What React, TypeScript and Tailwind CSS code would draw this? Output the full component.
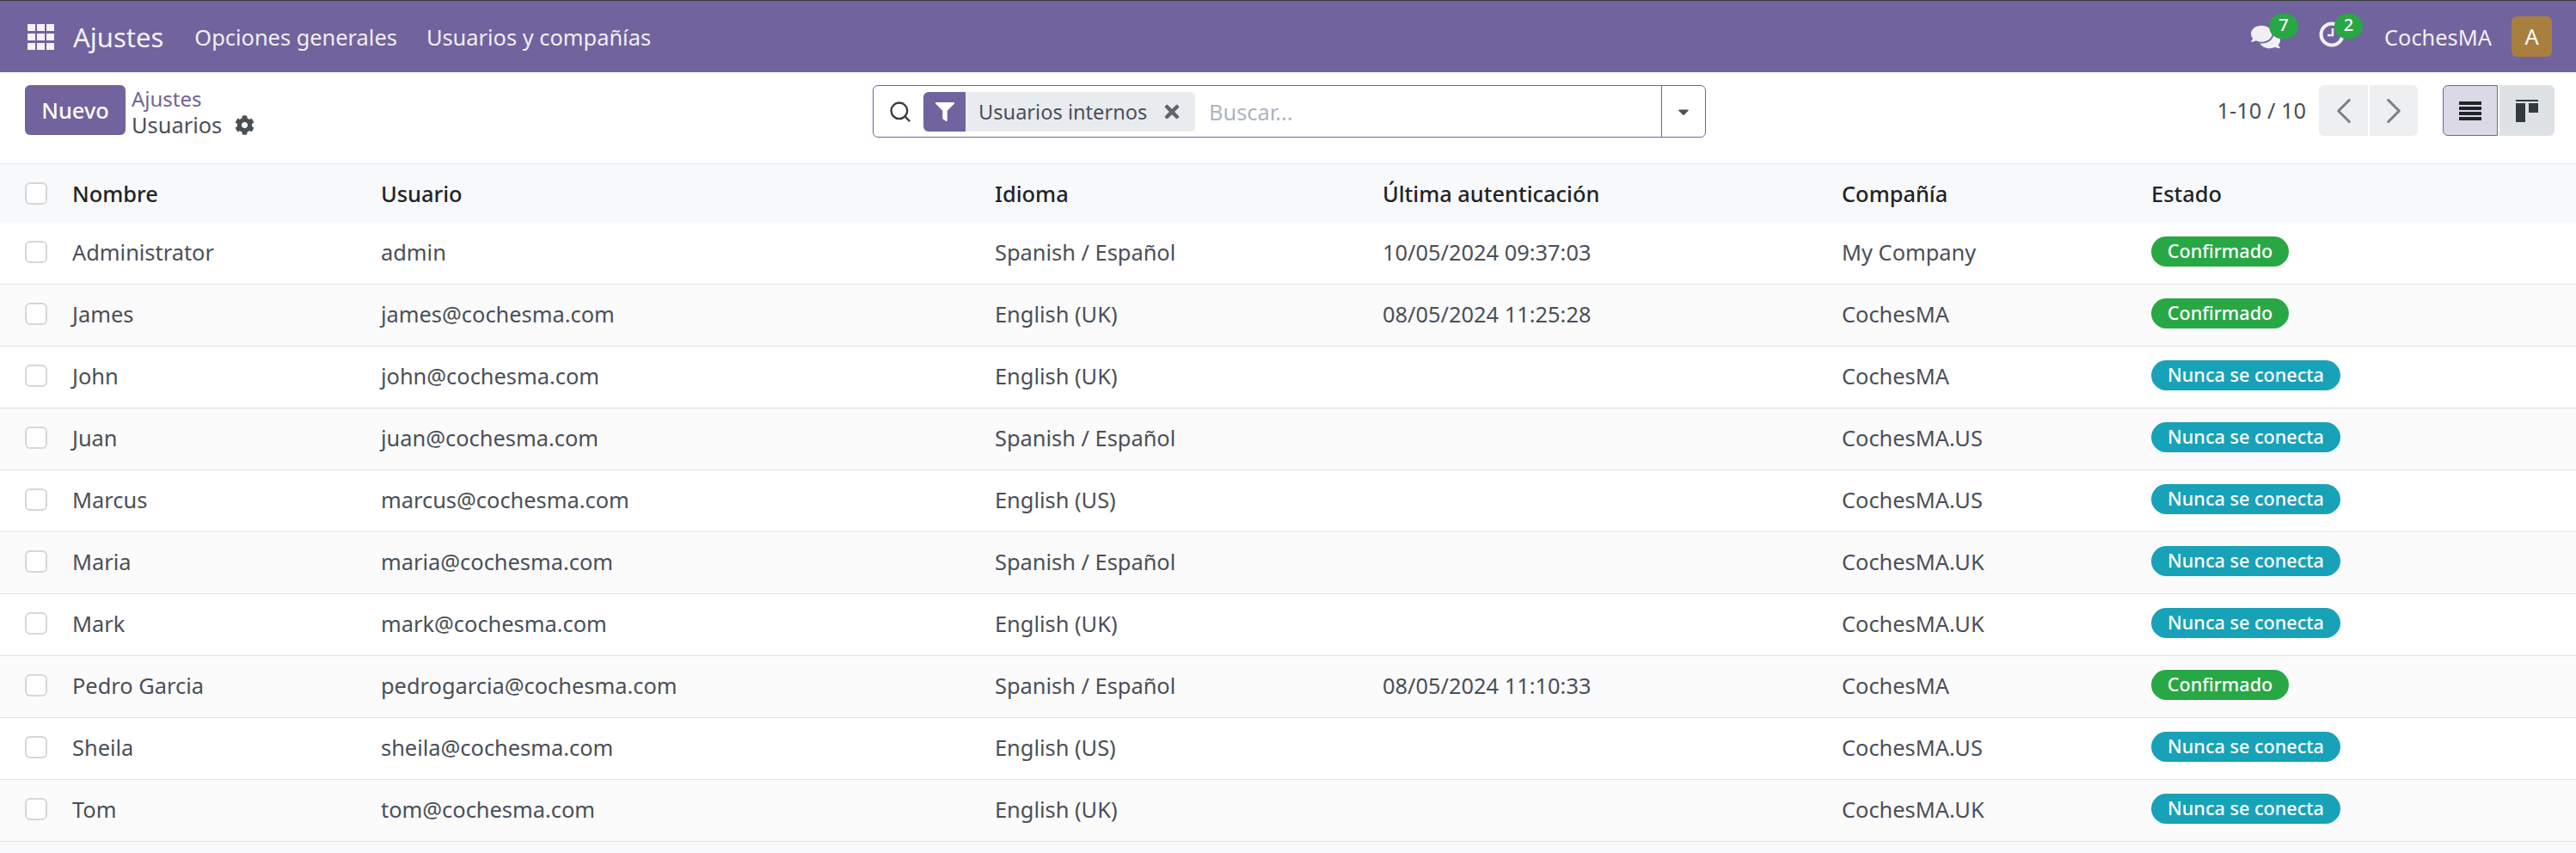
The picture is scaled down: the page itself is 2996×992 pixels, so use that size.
import React from 'react';
import { FaComments, FaCog, FaFilter, FaTimes, FaCaretDown } from 'react-icons/fa';
import { ChevronLeft, ChevronRight, Search } from 'lucide-react';

const users = [
  { name: 'Administrator', login: 'admin', lang: 'Spanish / Español', last: '10/05/2024 09:37:03', company: 'My Company', ok: true },
  { name: 'James', login: 'james@cochesma.com', lang: 'English (UK)', last: '08/05/2024 11:25:28', company: 'CochesMA', ok: true },
  { name: 'John', login: 'john@cochesma.com', lang: 'English (UK)', last: '', company: 'CochesMA', ok: false },
  { name: 'Juan', login: 'juan@cochesma.com', lang: 'Spanish / Español', last: '', company: 'CochesMA.US', ok: false },
  { name: 'Marcus', login: 'marcus@cochesma.com', lang: 'English (US)', last: '', company: 'CochesMA.US', ok: false },
  { name: 'Maria', login: 'maria@cochesma.com', lang: 'Spanish / Español', last: '', company: 'CochesMA.UK', ok: false },
  { name: 'Mark', login: 'mark@cochesma.com', lang: 'English (UK)', last: '', company: 'CochesMA.UK', ok: false },
  { name: 'Pedro Garcia', login: 'pedrogarcia@cochesma.com', lang: 'Spanish / Español', last: '08/05/2024 11:10:33', company: 'CochesMA', ok: true },
  { name: 'Sheila', login: 'sheila@cochesma.com', lang: 'English (US)', last: '', company: 'CochesMA.US', ok: false },
  { name: 'Tom', login: 'tom@cochesma.com', lang: 'English (UK)', last: '', company: 'CochesMA.UK', ok: false },
];

const gridCols = 'grid grid-cols-[84px_359px_714px_451px_534px_360px_1fr] items-center';

const AppsIcon = () => (
  <svg width="31" height="30" viewBox="0 0 31 30" fill="currentColor">
    {[0, 11, 22].map((y) =>
      [0, 11, 22].map((x) => <rect key={`${x}-${y}`} x={x} y={y} width="9" height="8" />)
    )}
  </svg>
);

const ClockIcon = () => (
  <svg width="30" height="30" viewBox="0 0 30 30" fill="none" stroke="currentColor">
    <circle cx="15" cy="15" r="12.5" strokeWidth="4" />
    <path d="M16 8v8h-6" strokeWidth="2.5" />
  </svg>
);

const ListIcon = () => (
  <svg width="26" height="22" viewBox="0 0 26 22" fill="#212529">
    <rect y="0" width="26" height="4" />
    <rect y="6" width="26" height="4" />
    <rect y="12" width="26" height="4" />
    <rect y="18" width="26" height="4" />
  </svg>
);

const KanbanIcon = () => (
  <svg width="26" height="26" viewBox="0 0 26 26" fill="#343a40">
    <rect width="26" height="2" />
    <rect y="4" width="11" height="22" />
    <rect x="15" y="4" width="11" height="11" />
  </svg>
);

const Checkbox = () => (
  <span className="block w-[26px] h-[26px] rounded-[6px] border-2 border-[#d5d7da] bg-white" />
);

const App = () => {
  return (
    <div className="h-[992px] bg-[#f8f9fa] font-['Noto_Sans',sans-serif] text-[25.4px] leading-[36px] text-[#4a4f57] overflow-hidden">
      {/* Navbar */}
      <div className="h-[84px] border-t border-[#3b3b3b] bg-[#71639e] flex items-center text-white">
        <div className="ml-8 w-[53px] text-[#f4f3f8]">
          <AppsIcon />
        </div>
        <span className="text-[31px] text-[#f4f3f8]">Ajustes</span>
        <span className="ml-[36px] text-[#f0eff5]">Opciones generales</span>
        <span className="ml-[34px] text-[#f0eff5]">Usuarios y compañías</span>
        <div className="ml-auto flex items-center text-[#f0eff5]">
          <div className="relative w-[80px] h-[36px]">
            <FaComments className="ml-px w-[34px] h-[34px] mt-px" />
            <span className="absolute left-[22px] -top-[9px] w-[34px] h-[29px] rounded-full bg-[#28a745] text-[20px] leading-[26px] text-center font-medium text-white">7</span>
          </div>
          <div className="relative w-[76px] h-[36px]">
            <ClockIcon />
            <span className="absolute left-[18px] -top-[9px] w-[33px] h-[29px] rounded-full bg-[#28a745] text-[20px] leading-[26px] text-center font-medium text-white">2</span>
          </div>
          <span>CochesMA</span>
          <span className="ml-[23px] mr-7 w-[47px] h-[47px] rounded-[6px] bg-[#a87f3f] text-white text-center leading-[47px]">A</span>
        </div>
      </div>

      {/* Control panel */}
      <div className="h-[107px] bg-white border-b border-[#dee2e6] flex items-start pt-[15px]">
        <div className="w-[1015px] flex pl-[29px]">
          <button className="w-[117px] h-[58px] rounded-[6px] bg-[#71639e] text-white font-medium">Nuevo</button>
          <div className="ml-[7px] flex flex-col">
            <span className="text-[#71639e] text-[24px] leading-[30px] mt-[1px]">Ajustes</span>
            <div className="flex items-center">
              <span className="leading-[31px]">Usuarios</span>
              <FaCog className="ml-[15px] w-[23px] h-[23px] text-[#495057]" />
            </div>
          </div>
        </div>
        <div className="w-[969px] h-[61px] rounded-[6px] border border-[#71639e] flex items-center">
          <Search className="ml-[17px] w-[28px] h-[28px] text-[#343a40]" strokeWidth={2} />
          <div className="ml-[13px] h-[46px] w-[316px] rounded-[6px] bg-[#e9ecef] flex items-center overflow-hidden">
            <span className="w-[49px] h-full bg-[#71639e] flex items-center justify-center">
              <FaFilter className="w-[22px] h-[22px] text-white" />
            </span>
            <span className="ml-[15px] text-[#495057] text-[23.6px]">Usuarios internos</span>
            <FaTimes className="ml-[17px] w-[24px] h-[24px] text-[#5f656b]" />
          </div>
          <span className="ml-4 text-[#adb5bd] text-[25.4px]">Buscar...</span>
          <div className="ml-auto w-[51px] h-full border-l border-[#71639e] flex items-center justify-center">
            <FaCaretDown className="w-[20px] h-[20px] text-[#495057]" />
          </div>
        </div>
        <div className="ml-auto flex items-center mr-[25px]">
          <span className="mr-[15px] leading-[59px]">1-10 / 10</span>
          <div className="flex gap-[2px] mr-[29px]">
            <span className="w-[57px] h-[59px] rounded-l-[6px] bg-[#eeeff1] flex items-center justify-center">
              <ChevronLeft className="w-[50px] h-[50px] text-[#808080]" strokeWidth={1.5} />
            </span>
            <span className="w-[56px] h-[59px] rounded-r-[6px] bg-[#eeeff1] flex items-center justify-center">
              <ChevronRight className="w-[50px] h-[50px] text-[#808080]" strokeWidth={1.5} />
            </span>
          </div>
          <div className="flex gap-[2px]">
            <span className="w-[64px] h-[59px] rounded-l-[6px] bg-[#dcd9e6] border border-[#71639e] flex items-center justify-center">
              <ListIcon />
            </span>
            <span className="w-[64px] h-[59px] rounded-r-[6px] bg-[#dee2e6] flex items-center justify-center">
              <KanbanIcon />
            </span>
          </div>
        </div>
      </div>

      {/* Users list */}
      <div className={`${gridCols} h-[68px] bg-[#f8f9fa] font-medium text-[#1f2328]`}>
        <div className="pl-[29px]"><Checkbox /></div>
        <span>Nombre</span>
        <span>Usuario</span>
        <span>Idioma</span>
        <span>Última autenticación</span>
        <span>Compañía</span>
        <span>Estado</span>
      </div>
      {users.map((user, index) => (
        <div
          key={user.name}
          className={`${gridCols} h-[72px] pb-[4px] border-b border-[#e2e2e9] ${index % 2 === 0 ? 'bg-white' : 'bg-[#fbfbfc]'}`}
        >
          <div className="pl-[29px]"><Checkbox /></div>
          <span>{user.name}</span>
          <span>{user.login}</span>
          <span>{user.lang}</span>
          <span>{user.last}</span>
          <span>{user.company}</span>
          <div className="flex">
            {user.ok ? (
              <span className="h-[35px] w-[160px] rounded-full bg-[#28a745] text-white text-[21.6px] leading-[34px] text-center font-medium">Confirmado</span>
            ) : (
              <span className="h-[35px] w-[220px] rounded-full bg-[#17a2b8] text-white text-[21.6px] leading-[34px] text-center font-medium">Nunca se conecta</span>
            )}
          </div>
        </div>
      ))}
    </div>
  );
};

export default App;
